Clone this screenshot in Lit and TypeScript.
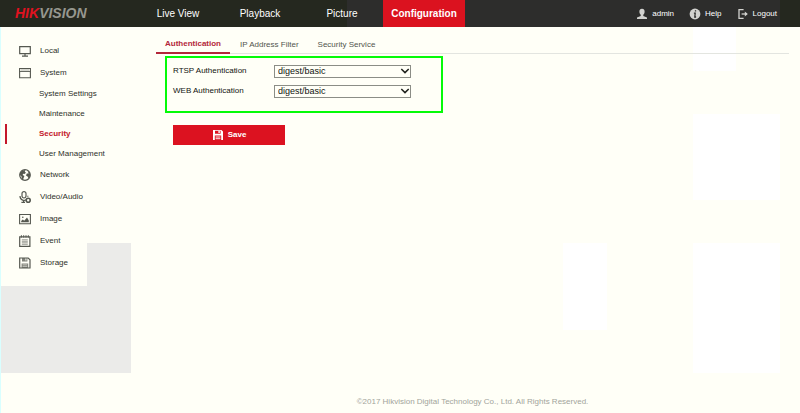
import { LitElement, html, svg, css } from "lit";
import { customElement, state } from "lit/decorators.js";
import { classMap } from "lit/directives/class-map.js";

const icons: Record<string, unknown> = {
  local: svg`<path d="M.7 1.600h10.600v7H.7z M6 8.600v2.200 M3 11.100h6" fill="none" stroke="currentColor" stroke-width="1.200"/>`,
  system: svg`<path d="M.6 1.500h10.800v9.200H.6z" fill="none" stroke="currentColor" stroke-width="1.100"/><path d="M.6 4.500h10.800" stroke="currentColor" stroke-width=".9"/><path d="M2 3h8" stroke="currentColor" stroke-width=".5"/>`,
  network: svg`<circle cx="6" cy="6" r="5.300" fill="none" stroke="currentColor" stroke-width="1.200"/><path d="M1 4.200 3 1.600 6.400 1 5.800 2.800 7 3.800 5.400 5 4.200 4.800 3.600 6 5.400 7 4.600 9 4 10.800 2.800 9.400 2.400 7.200.8 6z M8.600 1.600 11 4.400 11 7.400 9.600 9.400 8.800 7.800 7 6.600 7.800 4.600 9.600 4.400z" fill="currentColor"/>`,
  video: svg`<rect x="3" y=".6" width="4" height="6.400" rx="2" fill="none" stroke="currentColor" stroke-width="1.200"/><path d="M1 5c0 5 5 4.600 6 3.600 M8.800 4.800v1 M4.600 9v2 M2.400 11.300h3.600" fill="none" stroke="currentColor" stroke-width="1.200"/><circle cx="9.200" cy="9.200" r="2" fill="none" stroke="currentColor" stroke-width="1.600"/>`,
  image: svg`<path d="M.6 1.500h10.800v9.200H.6z" fill="none" stroke="currentColor" stroke-width="1.100"/><path d="M2.200 9.200V8l1.600-1.600 1.400 1.400L8 4.400l1.800 3v1.800z" fill="currentColor"/><circle cx="3.800" cy="4.200" r=".8" fill="currentColor"/>`,
  event: svg`<path d="M.7 1.900h10.200v9.400H.7z" fill="none" stroke="currentColor" stroke-width="1.200"/><path d="M2.400.2v2.400M4.700.2v2.400M7 .2v2.400M9.300.2v2.400" stroke="currentColor" stroke-width="1"/><path d="M2.800 4.800h6M2.800 6.300h6M2.800 7.800h6M2.800 9.300h6" stroke="currentColor" stroke-width=".6"/>`,
  storage: svg`<path d="M.7 1h8.500L11 2.800V11H.7z" fill="none" stroke="currentColor" stroke-width="1.200"/><path d="M3 1h5.400v3.400H3z M2.600 6.400h6.600V11H2.600z" fill="currentColor" opacity=".75"/><path d="M6.400 1.600h1v2h-1z" fill="#fffff7"/><path d="M3.600 7.800h4.600M3.600 9.400h4.600" stroke="#fffff7" stroke-width=".5"/>`,
  save: svg`<path fill-rule="evenodd" d="M1 1h8.400L11 2.600V11H1z M3 1.800v3h5.600v-3z M2.800 6.600V11h6.400V6.600z" fill="currentColor"/><path d="M6.400 1.800h1.400v2.200H6.400z" fill="currentColor"/><path d="M3.600 8h4.800M3.600 9.700h4.800" stroke="currentColor" stroke-width=".9"/>`,
  user: svg`<path d="M6 .8c2 0 2.800 1.400 2.600 3.200C8.500 5.400 7.800 6.200 7.300 6.800v1.200l3.700 1.400V11H1V9.400L4.700 8V6.800C4.200 6.200 3.500 5.400 3.400 4 3.200 2.200 4 .8 6 .8z" fill="currentColor"/>`,
  help: svg`<circle cx="6" cy="6" r="5.400" fill="currentColor"/><path d="M6.500 2.200v1.400M4.900 5.200h1.300L5.800 9h1.300" fill="none" stroke="#2d2d2c" stroke-width="1.300"/>`,
  logout: svg`<path d="M6.600 1.700H2v8.600h4.600" fill="none" stroke="currentColor" stroke-width="1.300"/><path d="M4.600 6h5" stroke="currentColor" stroke-width="1.300"/><path d="M7.800 3.400 10.800 6 7.800 8.600z" fill="currentColor"/>`,
};

const icon = (name: string) =>
  html`<svg class="icon" viewBox="0 0 12 12" aria-hidden="true">${icons[name]}</svg>`;

interface MenuItem {
  label: string;
  icon: string;
  children?: string[];
}

const menu: MenuItem[] = [
  { label: "Local", icon: "local" },
  {
    label: "System",
    icon: "system",
    children: ["System Settings", "Maintenance", "Security", "User Management"],
  },
  { label: "Network", icon: "network" },
  { label: "Video/Audio", icon: "video" },
  { label: "Image", icon: "image" },
  { label: "Event", icon: "event" },
  { label: "Storage", icon: "storage" },
];

const sections = ["Live View", "Playback", "Picture", "Configuration"];
const tabs = ["Authentication", "IP Address Filter", "Security Service"];
const account = [
  { label: "admin", icon: "user" },
  { label: "Help", icon: "help" },
  { label: "Logout", icon: "logout" },
];
const fields = [
  { id: "rtsp", label: "RTSP Authentication" },
  { id: "web", label: "WEB Authentication" },
];

@customElement("app-root")
export class AppRoot extends LitElement {
  @state() private page = "Security";
  @state() private tab = "Authentication";

  static styles = css`
    :host {
      display: flex;
      flex-direction: column;
      min-height: 100vh;
      box-sizing: border-box;
      font: 9px/12px "Liberation Sans", Arial, sans-serif;
      color: #2e312a;
      background:
        linear-gradient(#d9ffff, #d9ffff) 0 0 / 1px 100% no-repeat,
        linear-gradient(#ebebe9, #ebebe9) 0 286px / 131px 87px no-repeat,
        linear-gradient(#ebebe9, #ebebe9) 87px 243px / 44px 44px no-repeat,
        linear-gradient(#fff, #fff) 693px 27px / 43px 44px no-repeat,
        linear-gradient(#fff, #fff) 693px 114px / 87px 86px no-repeat,
        linear-gradient(#fff, #fff) 563px 243px / 44px 87px no-repeat,
        linear-gradient(#fff, #fff) 693px 243px / 87px 130px no-repeat,
        #fffff7;
    }
    a {
      color: inherit;
      text-decoration: none;
      white-space: nowrap;
    }
    ul {
      list-style: none;
      margin: 0;
      padding: 0;
    }
    .icon {
      width: 12px;
      height: 12px;
      flex: none;
    }
    .header {
      display: flex;
      height: 27px;
      color: #fff;
      background: linear-gradient(90deg, #25281f 347px, #2d2d2c 347px, #2d2d2c 780px, #25281f 780px);
    }
    .logo {
      width: 122px;
      padding-left: 15px;
      font: italic bold 14px/27px "Liberation Sans", Arial, sans-serif;
      color: #96978f;
    }
    .logo-red {
      color: #e0121f;
    }
    .sections {
      display: flex;
      font-size: 10px;
      line-height: 27px;
    }
    .section {
      width: 82px;
      text-align: center;
    }
    .section.active {
      background: #db121f;
      font-weight: bold;
    }
    .account {
      display: flex;
      gap: 15px;
      margin-left: auto;
      padding-right: 23px;
      font-size: 8px;
    }
    .account-link {
      display: flex;
      align-items: center;
      gap: 4px;
    }
    .account-link .icon {
      color: #d2d2cf;
    }
    .body {
      display: flex;
      flex: 1;
    }
    .sidebar {
      width: 151px;
      padding: 13px 0 0 5px;
      flex: none;
    }
    .item,
    .sub-item {
      display: flex;
      align-items: center;
      border-left: 2px solid transparent;
    }
    .item {
      gap: 9px;
      height: 22px;
      padding-left: 12px;
      font-size: 8px;
    }
    .item .icon {
      color: #555850;
    }
    .sub-item {
      height: 20px;
      padding-left: 32px;
      font-size: 8px;
    }
    .sub-item.active {
      border-color: #c3182b;
      color: #c3182b;
      font-weight: bold;
    }
    .main {
      display: flex;
      flex-direction: column;
      flex: 1;
      margin-right: 11px;
    }
    .tabs {
      display: flex;
      gap: 1px;
      height: 26px;
      border-bottom: 1px solid #e3e5e0;
    }
    .tab {
      box-sizing: border-box;
      height: 27px;
      padding: 0 9px;
      line-height: 36px;
      font-size: 8px;
      color: #52554d;
    }
    .tab.active {
      border-bottom: 2px solid #b3273a;
      color: #b3273a;
      font-weight: bold;
      line-height: 34px;
    }
    .form {
      display: flex;
      flex-direction: column;
      align-items: flex-start;
      gap: 12px;
      padding: 2px 0 0 9px;
    }
    .fields {
      padding: 3px 30px 10px 6px;
      border: 2px solid #04fb08;
    }
    .field {
      display: grid;
      grid-template-columns: 101px 137px;
      align-items: center;
      height: 20px;
      font-size: 8px;
      color: #11130f;
    }
    .picker {
      display: grid;
      align-items: center;
    }
    .picker > * {
      grid-area: 1 / 1;
    }
    .select {
      appearance: none;
      box-sizing: border-box;
      width: 100%;
      height: 13px;
      margin: 0;
      padding: 0 14px 0 3px;
      border: 1px solid #8b8d86;
      border-radius: 0;
      background: #fffff7;
      color: #11130f;
      font: 9px/11px "Liberation Sans", Arial, sans-serif;
    }
    .chevron {
      width: 10px;
      height: 6px;
      justify-self: end;
      margin-right: 1px;
      pointer-events: none;
    }
    .save {
      display: flex;
      align-items: center;
      justify-content: center;
      gap: 4px;
      width: 112px;
      height: 20px;
      margin-left: 8px;
      padding: 0;
      border: 0;
      background: #dc1220;
      color: #fff;
      font: bold 8px/12px "Liberation Sans", Arial, sans-serif;
    }
    .footer {
      margin-top: auto;
      padding-bottom: 5px;
      text-align: center;
      font-size: 8px;
      color: #a2a49b;
    }
  `;

  private go(event: Event, set: () => void) {
    event.preventDefault();
    set();
  }

  private subItem(label: string) {
    return html`<li>
      <a
        class=${classMap({ "sub-item": true, active: label === this.page })}
        href="#"
        @click=${(e: Event) => this.go(e, () => (this.page = label))}
        >${label}</a
      >
    </li>`;
  }

  render() {
    return html`
      <header class="header">
        <a class="logo" href="#"><span class="logo-red">HIK</span>VISION</a>
        <nav class="sections">
          ${sections.map(
            (s) =>
              html`<a class=${classMap({ section: true, active: s === "Configuration" })} href="#">${s}</a>`,
          )}
        </nav>
        <nav class="account">
          ${account.map((a) => html`<a class="account-link" href="#">${icon(a.icon)}${a.label}</a>`)}
        </nav>
      </header>
      <div class="body">
        <nav class="sidebar">
          <ul>
            ${menu.map(
              (m) => html`<li>
                <a class="item" href="#">${icon(m.icon)}${m.label}</a>
                ${m.children ? html`<ul>${m.children.map((c) => this.subItem(c))}</ul>` : null}
              </li>`,
            )}
          </ul>
        </nav>
        <main class="main">
          <nav class="tabs">
            ${tabs.map(
              (t) => html`<a
                class=${classMap({ tab: true, active: t === this.tab })}
                href="#"
                @click=${(e: Event) => this.go(e, () => (this.tab = t))}
                >${t}</a
              >`,
            )}
          </nav>
          <form class="form" @submit=${(e: Event) => e.preventDefault()}>
            <div class="fields">
              ${fields.map(
                (f) => html`<div class="field">
                  <label for=${f.id}>${f.label}</label>
                  <div class="picker">
                    <select class="select" id=${f.id}>
                      <option>digest/basic</option>
                    </select>
                    <svg class="chevron" viewBox="0 0 10 6" aria-hidden="true">
                      <path d="M1.300 1 5 4.600 8.700 1" fill="none" stroke="#1f211c" stroke-width="1.500" />
                    </svg>
                  </div>
                </div>`,
              )}
            </div>
            <button class="save" type="submit">${icon("save")}Save</button>
          </form>
          <footer class="footer">
            ©2017 Hikvision Digital Technology Co., Ltd. All Rights Reserved.
          </footer>
        </main>
      </div>
    `;
  }
}
